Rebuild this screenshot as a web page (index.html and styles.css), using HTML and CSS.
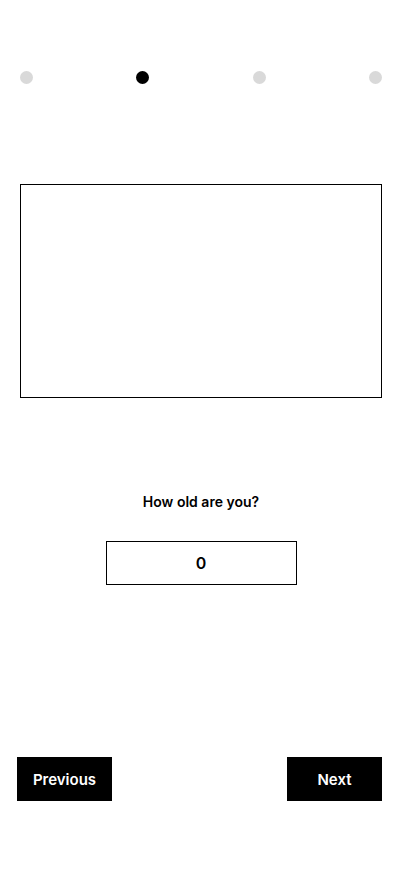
FILE: index.html
```html
<!doctype html>
<html lang="en">
<head>
	<meta charset="UTF-8">
	<title>Age</title>
	<link rel="stylesheet" href="styles.css">
</head>
<body>
	<div class="steps">
		<span class="dot"></span>
		<span class="dot active"></span>
		<span class="dot"></span>
		<span class="dot"></span>
	</div>
	<div class="frame"></div>
	<p class="question">How old are you?</p>
	<div class="answer">0</div>
	<div class="nav">
		<button class="btn">Previous</button>
		<button class="btn">Next</button>
	</div>
</body>
</html>
```

FILE: styles.css
```css
*{
	margin: 0;
	padding: 0;
	box-sizing: border-box;
}
body{
	width: 402px;
	height: 874px;
	background: #fff;
	color: #000;
	font-family: Inter, "Noto Sans", sans-serif;
}
.steps{
	display: flex;
	justify-content: space-between;
	padding: 71px 20px 0;
}
.dot{
	width: 13px;
	height: 13px;
	border-radius: 50%;
	background: #d9d9d9;
}
.dot.active{
	background: #000;
}
.frame{
	margin: 100px 20px 0;
	height: 214px;
	border: 1px solid #000;
}
.question{
	margin-top: 95px;
	text-align: center;
	font-size: 14px;
	font-weight: 600;
	line-height: 17px;
}
.answer{
	width: 191px;
	height: 44px;
	margin: 31px auto 0;
	border: 1px solid #000;
	display: flex;
	align-items: center;
	justify-content: center;
	font-size: 16px;
	font-weight: 600;
}
.nav{
	display: flex;
	justify-content: space-between;
	padding: 0 20px 0 17px;
	margin-top: 172px;
}
.btn{
	width: 95px;
	height: 44px;
	border: none;
	background: #000;
	color: #fff;
	font-family: inherit;
	font-size: 15px;
	font-weight: 600;
	cursor: pointer;
}
```
